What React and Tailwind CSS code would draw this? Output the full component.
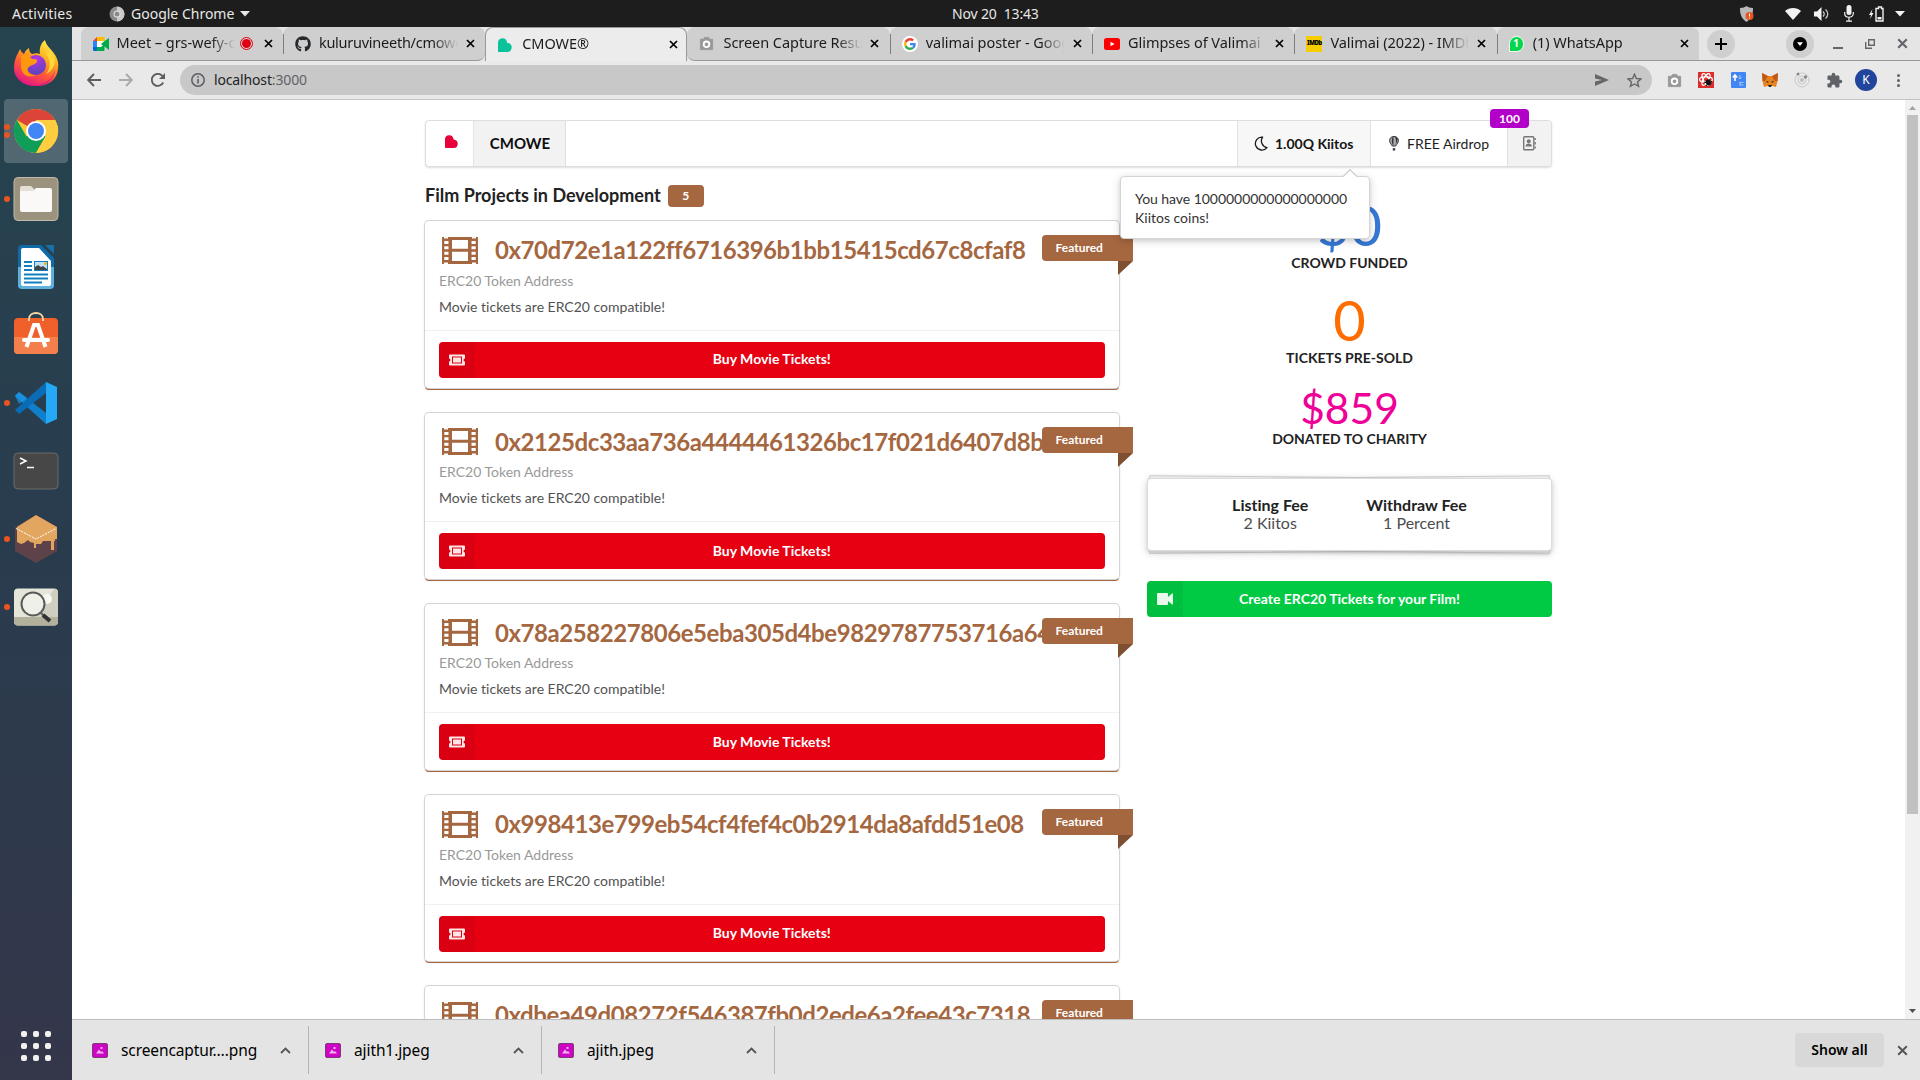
import React from "react";
import { FaGithub } from "react-icons/fa";
import { MdExtension } from "react-icons/md";

/* ---------- dock icons ---------- */

const FirefoxIcon = () => (
  <svg width="46" height="48" viewBox="0 0 46 48">
    <defs>
      <linearGradient id="ffBody" x1="0.8" y1="0" x2="0.3" y2="1">
        <stop offset="0" stopColor="#fff44f" />
        <stop offset="0.35" stopColor="#ffb020" />
        <stop offset="0.65" stopColor="#ff5a36" />
        <stop offset="1" stopColor="#e31587" />
      </linearGradient>
      <radialGradient id="ffGlobe" cx="0.5" cy="0.2" r="0.9">
        <stop offset="0" stopColor="#b833e1" />
        <stop offset="1" stopColor="#4a48b8" />
      </radialGradient>
    </defs>
    <path d="M7 10c1 2 2 4 4 5 1-3 3-5 5-6 0 3 1 5 3 6 3-1 6-1 8 0-1-6 1-11 5-14 1 5 5 8 8 12 4 5 6 10 5 17-1 11-10 17-22 17S1 40 1 29c0-8 3-13 6-19z" fill="url(#ffBody)" />
    <circle cx="23" cy="26" r="10" fill="url(#ffGlobe)" />
    <path d="M8 17c5-3 9 0 11 3 3 0 6 0 5 3-2 3-7 3-9 6-2 4 3 8 8 7-8 4-15-1-15-9z" fill="#ff980e" />
    <path d="M33 15c5 6 5 14 0 20 9-4 12-15 4-24z" fill="#ffd83a" />
    <path d="M3 34c4 11 16 14 25 11 8-2 13-8 14-15 0 10-8 17-19 17C13 47 5 43 3 34z" fill="#e31587" opacity=".85" />
  </svg>
);

const ChromeIcon = () => (
  <svg width="46" height="46" viewBox="0 0 46 46">
    <circle cx="23" cy="23" r="22" fill="#fcc934" />
    <path d="M23 23 L3.9 12 A22 22 0 0 1 42.1 12 Z" fill="#db4437" />
    <path d="M23 12h19.1a22 22 0 0 1 2.9 11H23z" fill="#fcc934" />
    <path d="M3.9 12A22 22 0 0 0 23 45l9.500-16.500L23 23 13.500 28.500z" fill="#0f9d58" />
    <path d="M23 45a22 22 0 0 0 19.100-33H23l9.500 16.500z" fill="#ffcd40" />
    <circle cx="23" cy="23" r="10" fill="#fff" />
    <circle cx="23" cy="23" r="8" fill="#4285f4" />
  </svg>
);

const FilesIcon = () => (
  <svg width="46" height="46" viewBox="0 0 46 46">
    <rect x="1" y="1.5" width="44" height="43" rx="4" fill="#9c937f" stroke="#c2bba9" />
    <path d="M7 12a2 2 0 0 1 2-2h9l3 3v8H7z" fill="#e3dfd4" />
    <path d="M7 15h13l3-3h14a2 2 0 0 1 2 2v20a2 2 0 0 1-2 2H9a2 2 0 0 1-2-2z" fill="#faf9f7" />
  </svg>
);

const WriterIcon = () => (
  <svg width="38" height="46" viewBox="0 0 38 46">
    <path d="M5 1h19l13 13v27a4 4 0 0 1-4 4H5a4 4 0 0 1-4-4V5a4 4 0 0 1 4-4z" fill="#0f6ba8" />
    <path d="M1 23h36v18a4 4 0 0 1-4 4H5a4 4 0 0 1-4-4z" fill="#5fb0de" />
    <path d="M6 4h16l12 13v23a2 2 0 0 1-2 2H6a2 2 0 0 1-2-2V6a2 2 0 0 1 2-2z" fill="#fff" />
    <path d="M28 1h9v9z" fill="#1a6fa8" />
    <path d="M7 18h8M7 22h8M7 26h8M7 30.500h24M7 34.500h24M7 38.500h18" stroke="#0f80bd" strokeWidth="1.800" />
    <rect x="17.500" y="17.500" width="13" height="9" fill="#bfe0f5" stroke="#0f80bd" />
    <path d="M18 26v-3l3-2 3 2 2-1 4 3v1z" fill="#444" />
    <circle cx="28.500" cy="19.500" r="1.500" fill="#f5b400" />
  </svg>
);

const SoftwareIcon = () => (
  <svg width="46" height="46" viewBox="0 0 46 46" className="mb-[5px]">
    <rect x="1" y="8" width="44" height="36" rx="4" fill="#f0602a" />
    <path d="M1 27h44v13a4 4 0 0 1-4 4H5a4 4 0 0 1-4-4z" fill="#f37f4d" />
    <path d="M16 11V9c0-8 14-8 14 0v2" fill="none" stroke="#f3d9a5" strokeWidth="2" />
    <path d="M13.500 37L21 15h4l7.500 22" fill="none" stroke="#fff" strokeWidth="4" />
    <path d="M11 30h24" stroke="#fff" strokeWidth="4" strokeLinecap="round" />
  </svg>
);

const CodeIcon = () => (
  <svg width="44" height="44" viewBox="0 0 44 44">
    <path d="M1 15l4-4 27 21v11z" fill="#1180cc" />
    <path d="M1 29l4 4 27-21V1z" fill="#0a6cb5" />
    <path d="M1 15l4-4 8 6-8 6z" fill="#1f9cf0" opacity=".6" />
    <path d="M32 1l11 5v32l-11 5z" fill="#25a9f5" />
  </svg>
);

const TerminalIcon = () => (
  <svg width="46" height="40" viewBox="0 0 46 40">
    <rect x="1" y="2" width="44" height="36" rx="4" fill="#474747" stroke="#6b6b6b" />
    <path d="M7 7l6 3-6 3" fill="none" stroke="#fff" strokeWidth="1.500" />
    <path d="M14 16.500h7" stroke="#fff" strokeWidth="1.500" />
  </svg>
);

const CubeIcon = () => (
  <svg width="44" height="48" viewBox="0 0 44 48">
    <path d="M22 0l21 12v24L22 48 1 36V12z" fill="#5d4349" />
    <path d="M22 0l21 12v12h-2v2h-1v9h-3v-9h-8l-2 3h-5v4h-2v-5l-4-1-2-2-4 3-3 1-4-2V12z" fill="#e2a660" />
    <path d="M2 13.500l20 10.500 20-10.500" fill="none" stroke="#fff" strokeWidth="1" strokeDasharray="2 1" />
  </svg>
);

const ViewerIcon = () => (
  <svg width="46" height="40" viewBox="0 0 46 40">
    <rect x="1" y="1.500" width="44" height="37" rx="4" fill="#e6e5da" />
    <path d="M22 31L41 2c3 0 4 2 4 4v25z" fill="#cfcebf" />
    <path d="M1 30h44v4.500a4 4 0 0 1-4 4H5a4 4 0 0 1-4-4z" fill="#b3b09c" />
    <circle cx="34" cy="12" r="5" fill="#f7f7f2" />
    <circle cx="20" cy="17" r="11.500" fill="#f3f3ef" fillOpacity=".75" stroke="#5a5a5a" strokeWidth="2" />
    <path d="M28 26l3 3" stroke="#5a5a5a" strokeWidth="2" />
    <path d="M30 28l7 6" stroke="#333" strokeWidth="4" />
  </svg>
);

const dock = [
  { Icon: FirefoxIcon, dots: 0 },
  { Icon: ChromeIcon, dots: 2, active: true },
  { Icon: FilesIcon, dots: 1 },
  { Icon: WriterIcon, dots: 0 },
  { Icon: SoftwareIcon, dots: 0 },
  { Icon: CodeIcon, dots: 1 },
  { Icon: TerminalIcon, dots: 0 },
  { Icon: CubeIcon, dots: 1 },
  { Icon: ViewerIcon, dots: 1 },
];

function Dock() {
  return (
    <div className="flex w-[72px] shrink-0 flex-col justify-between bg-gradient-to-b from-[#25444f] via-[#293c4e] to-[#34364a] pb-[19px] pt-1">
      <div className="flex flex-col gap-1">
        {dock.map(({ Icon, dots, active }, i) => (
          <div key={i} className="flex h-16 items-center pl-1">
            <div className={"relative flex h-16 w-16 items-center justify-center rounded " + (active ? "bg-white/20" : "")}>
              <div className="absolute left-0 flex flex-col gap-[2px]">
                {Array.from({ length: dots }).map((_, d) => (
                  <span key={d} className="h-[6px] w-[6px] rounded-full bg-[#e95420]" />
                ))}
              </div>
              <Icon />
            </div>
          </div>
        ))}
      </div>
      <div className="ml-[21px] grid w-[30px] grid-cols-3 gap-[6px]">
        {Array.from({ length: 9 }).map((_, i) => (
          <span key={i} className="h-[6px] w-[6px] rounded-[2px] bg-[#f2f1f0]" />
        ))}
      </div>
    </div>
  );
}

/* ---------- desktop top bar ---------- */

function TopBar() {
  return (
    <div className="relative flex h-[27px] items-center bg-[#1d1d1d] text-[14px] text-[#e8e8e6]">
      <span className="ml-3 w-[97px] tracking-[0.2px]">Activities</span>
      <svg width="16" height="16" viewBox="0 0 16 16">
        <circle cx="8" cy="8" r="7.500" fill="#8a8a8a" />
        <path d="M8 8V.5A7.500 7.500 0 0 1 8 15.500z" fill="#c9c9c9" />
        <circle cx="8" cy="8" r="3.500" fill="#e6e6e6" />
        <circle cx="8" cy="8" r="2.500" fill="#8a8a8a" />
      </svg>
      <span className="ml-[6px]">Google Chrome</span>
      <svg className="ml-[6px]" width="10" height="6" viewBox="0 0 10 6"><path d="M0 0h10L5 5.500z" fill="#e8e8e6" /></svg>
      <span className="absolute left-[952px] whitespace-pre tracking-[-0.15px]">Nov 20  13:43</span>
      <div className="ml-auto flex h-full items-center">
        <svg className="mr-[31px]" width="14" height="16" viewBox="0 0 14 16">
          <path d="M6.500 0C8 1 10 2 13 2c0 6-1 10-6.500 14C1 12 0 8 0 2c3 0 5-1 6.500-2z" fill="#b9b9b9" />
          <circle cx="9.500" cy="10" r="4" fill="#e95420" />
          <path d="M9.500 7.500v3M9.500 11.500v1" stroke="#fff" strokeWidth="1" />
        </svg>
        <svg className="mr-[13px]" width="16" height="12" viewBox="0 0 16 12"><path d="M0 3C4-1 12-1 16 3L8 12z" fill="#f2f2f2" /></svg>
        <svg className="mr-[15px]" width="15" height="14" viewBox="0 0 15 14">
          <path d="M0 4.500h3L7.500 0v14L3 9.500H0z" fill="#f2f2f2" />
          <path d="M9 4.500c1.500 1.500 1.500 3.500 0 5M11.500 2.500c3 2.500 3 6.500 0 9" fill="none" stroke="#cfcfcf" strokeWidth="1.200" />
        </svg>
        <svg className="mr-[15px]" width="10" height="17" viewBox="0 0 10 17">
          <rect x="2.500" y="0" width="5" height="10" rx="2.500" fill="#f2f2f2" />
          <path d="M.7 7v1.500C.7 13.500 9.300 13.500 9.300 8.500V7M5 12v4M2 16.200h6" fill="none" stroke="#f2f2f2" strokeWidth="1.200" />
        </svg>
        <svg className="mr-[11px]" width="15" height="16" viewBox="0 0 15 16">
          <path d="M3.500 3L0 9h2l-1 4 3.500-6H2.500z" fill="#f2f2f2" />
          <path d="M7 2.500h2.500V1h3v1.500H14V15H7z" fill="none" stroke="#f2f2f2" strokeWidth="1.400" />
          <path d="M8.500 11h4v2.500h-4z" fill="#f2f2f2" />
        </svg>
        <svg className="mr-[15px]" width="10" height="6" viewBox="0 0 10 6"><path d="M0 0h10L5 5.500z" fill="#f2f2f2" /></svg>
      </div>
    </div>
  );
}

/* ---------- browser chrome ---------- */

const HeartShape = ({ color, size }) => (
  <svg width={size} height={size} viewBox="0 0 13 13">
    <path d="M0 4.300A4.200 4.200 0 0 1 8.300 3.600Q8.400 4.700 9.400 4.700A4.200 4.200 0 0 1 8.700 13H.8A.8 .8 0 0 1 0 12.200z" fill={color} />
  </svg>
);

const CameraIcon = ({ size = 16 }) => (
  <svg width={size} height={size} viewBox="0 0 16 16">
    <path d="M1.500 3.500h3L6 1.500h4l1.500 2h3v11h-13z" fill="#999" stroke="#999" strokeLinejoin="round" />
    <circle cx="8" cy="8.800" r="3" fill="none" stroke="#fff" strokeWidth="2" />
  </svg>
);

const CloseX = ({ color = "#000", size = 9, w = 1.7 }) => (
  <svg width={size} height={size} viewBox="0 0 9 9"><path d="M1 1l7 7M8 1L1 8" stroke={color} strokeWidth={w} /></svg>
);

const MeetIcon = () => (
  <svg width="16" height="16" viewBox="0 0 16 16">
    <path d="M0 5l4-4v4z" fill="#ea4335" />
    <path d="M4 1h7.500v4H4z" fill="#fbbc04" />
    <path d="M4 5h7.500v6H4z" fill="#fff" />
    <path d="M0 5h4v6H0z" fill="#2684fc" />
    <path d="M0 11h4v4H1.500A1.500 1.500 0 0 1 0 13.500z" fill="#0066da" />
    <path d="M4 11h4l3.500-3V14a1 1 0 0 1-1 1H4zM11.500 5L16 2v12l-4.500-3.500L8 8z" fill="#00ac47" />
  </svg>
);

const GoogleIcon = () => (
  <span className="flex h-4 w-4 items-center justify-center rounded-full bg-white">
    <svg width="12" height="12" viewBox="0 0 48 48">
      <path fill="#EA4335" d="M24 9.500c3.540 0 6.710 1.220 9.210 3.600l6.850-6.850C35.900 2.380 30.470 0 24 0 14.620 0 6.510 5.380 2.560 13.220l7.980 6.190C12.430 13.720 17.740 9.500 24 9.500z" />
      <path fill="#4285F4" d="M46.980 24.550c0-1.570-.15-3.090-.38-4.550H24v9.020h12.940c-.58 2.960-2.260 5.480-4.780 7.180l7.730 6c4.510-4.180 7.090-10.360 7.090-17.650z" />
      <path fill="#FBBC05" d="M10.530 28.590c-.48-1.450-.76-2.990-.76-4.590s.27-3.140.76-4.590l-7.980-6.190C.92 16.460 0 20.120 0 24c0 3.880.92 7.540 2.560 10.780l7.970-6.190z" />
      <path fill="#34A853" d="M24 48c6.480 0 11.930-2.130 15.890-5.810l-7.730-6c-2.150 1.450-4.920 2.300-8.160 2.300-6.260 0-11.570-4.220-13.470-9.910l-7.980 6.190C6.510 42.620 14.620 48 24 48z" />
    </svg>
  </span>
);

const YoutubeIcon = () => (
  <svg width="16" height="12" viewBox="0 0 16 12"><rect width="16" height="12" rx="2.500" fill="#f00" /><path d="M6.500 3.800l4 2.200-4 2.200z" fill="#fff" /></svg>
);

const ImdbIcon = () => (
  <span className="flex h-4 w-4 items-center justify-center bg-[#f5cd00] text-[6px] font-black tracking-[-0.5px] text-black">IMDb</span>
);

const WhatsappIcon = () => (
  <span className="flex h-[16px] w-[15px] items-center justify-center rounded-full rounded-bl-none border border-white bg-[#05d64c] text-[10px] font-bold text-white">1</span>
);

const tabs = [
  { title: "Meet – grs-wefy-oxc", icon: <MeetIcon />, rec: true },
  { title: "kuluruvineeth/cmowe", icon: <FaGithub size={16} color="#24292e" />, end: true },
  { title: "CMOWE®", icon: <HeartShape color="#0bc39b" size={14} />, active: true },
  { title: "Screen Capture Result", icon: <CameraIcon size={15} /> },
  { title: "valimai poster - Google", icon: <GoogleIcon /> },
  { title: "Glimpses of Valimai | A", icon: <YoutubeIcon /> },
  { title: "Valimai (2022) - IMDb", icon: <ImdbIcon /> },
  { title: "(1) WhatsApp", icon: <WhatsappIcon />, last: true },
];

function Tab({ t, i }) {
  const shape = t.active
    ? "h-[34px] border border-b-0 border-[#999] bg-[#ececec]"
    : "h-[34px] border-b border-[#999] bg-[#cfcfcf]";
  const sep = !t.active && i !== 0 && i !== 3;
  return (
    <div className={"relative flex w-[202.3px] shrink-0 items-center rounded-t-lg pl-3 " + shape + (t.end ? " rounded-br-lg" : "") + (i === 3 ? " rounded-bl-lg" : "")}>
      {sep && <span className="absolute left-0 top-[7px] h-[20px] w-px bg-[#7e7e7e]" />}
      <span className="flex w-6 shrink-0 items-center">{t.icon}</span>
      <span
        className={
          "mb-px shrink-0 overflow-hidden whitespace-nowrap text-[14.5px] text-[#1b1b1b] " +
          (t.end ? "tracking-[-0.25px] " : "tracking-[-0.05px] ") +
          (t.rec
            ? "w-[118px] [mask-image:linear-gradient(90deg,#000_80%,transparent)]"
            : "w-[139px] [mask-image:linear-gradient(90deg,#000_82%,transparent)]")
        }
      >
        {t.title}
      </span>
      {t.rec && (
        <span className="absolute left-[159px] flex h-[13px] w-[13px] items-center justify-center rounded-full border border-[#e00012]">
          <span className="h-[9px] w-[9px] rounded-full bg-[#e00012]" />
        </span>
      )}
      <span className="absolute left-[183px]"><CloseX /></span>
    </div>
  );
}

function TabStrip() {
  return (
    <div className="flex h-[34px] bg-[#e5e5e5] text-[#111]">
      <div className="w-[8.6px] shrink-0 border-b border-[#999]" />
      {tabs.map((t, i) => <Tab key={i} t={t} i={i} />)}
      <div className="flex flex-1 items-center border-b border-[#999] pl-2">
        <span className="flex h-7 w-7 items-center justify-center rounded-full bg-[#cfcfcf]">
          <svg width="12" height="12" viewBox="0 0 12 12"><path d="M6 0v12M0 6h12" stroke="#000" strokeWidth="2" /></svg>
        </span>
        <span className="ml-auto flex h-7 w-7 items-center justify-center rounded-full bg-[#cfcfcf]">
          <svg width="14" height="14" viewBox="0 0 14 14"><circle cx="7" cy="7" r="7" fill="#000" /><path d="M4 5.200h6L7 9z" fill="#fff" /></svg>
        </span>
        <span className="ml-[19px] mt-2 h-[2px] w-[10px] bg-[#63666a]" />
        <svg className="ml-[22px]" width="10" height="10" viewBox="0 0 10 10"><path d="M3.700.700h5.600v5.600H3.700zM.700 3v6.300H7" fill="none" stroke="#63666a" strokeWidth="1.400" /></svg>
        <span className="ml-[22px] mr-[12px]"><CloseX size={11} color="#63666a" w={1.8} /></span>
      </div>
    </div>
  );
}

const FoxIcon = () => (
  <svg width="16" height="15" viewBox="0 0 16 15">
    <path d="M0 0l6 3h4l6-3-.5 8L14 14l-3.500-1h-5L2 14 .5 8z" fill="#e8821e" />
    <path d="M0 0l6 3-3 5-2.500 0zM16 0l-6 3 3 5 2.500 0z" fill="#c0581a" />
    <path d="M4 8l2.500.500L6 10zM12 8l-2.500.500L10 10zM6 12h4l-1 2H7z" fill="#222" />
  </svg>
);

const BlueToolIcon = () => (
  <svg width="15" height="16" viewBox="0 0 15 16">
    <rect width="15" height="16" rx="1" fill="#4285f4" />
    <path d="M4 3v6M1.800 5.500L4 3l2.200 2.500" stroke="#fff" strokeWidth="1.600" fill="none" />
    <path d="M9 3v4M7.500 5.500L9 7l1.500-1.500M8.500 10.500h4M8.500 13h4M9 10v3.500" stroke="#a9c8fa" strokeWidth="1" fill="none" />
  </svg>
);

const RedToolIcon = () => (
  <svg width="16" height="16" viewBox="0 0 16 16">
    <rect width="16" height="16" fill="#dd2c2c" />
    <g fill="none" stroke="#fff" strokeWidth="1.200">
      <ellipse cx="8" cy="7.500" rx="6.500" ry="2.600" />
      <ellipse cx="8" cy="7.500" rx="6.500" ry="2.600" transform="rotate(60 8 7.500)" />
      <ellipse cx="8" cy="7.500" rx="6.500" ry="2.600" transform="rotate(120 8 7.500)" />
    </g>
    <ellipse cx="10.500" cy="10.500" rx="2.500" ry="3.200" fill="#111" transform="rotate(-35 10.500 10.500)" />
    <path d="M6 10l3 1M8 14l2-3M11 7l1 2M14 9l-2 2" stroke="#111" />
  </svg>
);

function Toolbar() {
  return (
    <div className="flex h-[39px] shrink-0 items-center border-b border-[#c2c2c2] bg-[#e9e9e9] pl-[15px]">
      <svg width="14" height="14" viewBox="0 0 14 14"><path d="M14 7H1.500M7 1L1.200 7 7 13" fill="none" stroke="#5b5e62" strokeWidth="1.900" /></svg>
      <svg className="ml-[18px]" width="14" height="14" viewBox="0 0 14 14"><path d="M0 7h12.500M7 1l5.800 6L7 13" fill="none" stroke="#a9abad" strokeWidth="1.900" /></svg>
      <svg className="ml-[18px]" width="14" height="14" viewBox="0 0 14 14"><path d="M12.200 9.500A6 6 0 1 1 11.400 3" fill="none" stroke="#5b5e62" strokeWidth="1.900" /><path d="M14 0v6H8z" fill="#5b5e62" /></svg>
      <div className="ml-[15px] flex h-[30px] w-[1472px] items-center rounded-full bg-[#c8c8c8] pl-[11px]">
        <svg width="14" height="14" viewBox="0 0 14 14"><circle cx="7" cy="7" r="6.200" fill="none" stroke="#5b5e62" strokeWidth="1.500" /><path d="M7 6v4.500M7 3.300v1.500" stroke="#5b5e62" strokeWidth="1.600" /></svg>
        <span className="mb-px ml-[9px] text-[14px] tracking-[-0.15px] text-[#222]">localhost<span className="text-[#5f6368]">:3000</span></span>
        <svg className="ml-auto" width="14" height="12" viewBox="0 0 14 12"><path d="M0 0l14 6-14 6V7.500L7 6 0 4.500z" fill="#63666a" /></svg>
        <svg className="ml-[18px] mr-[10px]" width="15" height="15" viewBox="0 0 15 15"><path d="M7.500 1.200l1.900 4.300 4.600.400-3.500 3 1.100 4.500-4.100-2.400-4.100 2.400 1.100-4.500-3.500-3 4.600-.400z" fill="none" stroke="#63666a" strokeWidth="1.400" /></svg>
      </div>
      <span className="ml-[15px] w-[31px]"><CameraIcon size={15} /></span>
      <span className="w-[33px]"><RedToolIcon /></span>
      <span className="w-[31px]"><BlueToolIcon /></span>
      <span className="w-[32px]"><FoxIcon /></span>
      <span className="w-[32px]">
        <svg width="16" height="16" viewBox="0 0 16 16"><circle cx="8" cy="8" r="7" fill="none" stroke="#c9c9c9" /><circle cx="8" cy="8" r="4" fill="none" stroke="#c9c9c9" /><circle cx="8" cy="8" r="2" fill="#bdbdbd" /><circle cx="4" cy="2" r="1.500" fill="#888" /><circle cx="11.500" cy="5" r="1.700" fill="#888" /></svg>
      </span>
      <span className="w-[29px]"><MdExtension size={17} color="#5f6368" /></span>
      <span className="flex h-[22px] w-[22px] items-center justify-center rounded-full bg-[#21459c] text-[12px] text-white">K</span>
      <span className="ml-[20px] flex flex-col gap-[2px]">
        {[0, 1, 2].map((d) => <span key={d} className="h-[3px] w-[3px] rounded-full bg-[#5f6368]" />)}
      </span>
    </div>
  );
}

/* ---------- page ---------- */

const FilmIcon = () => (
  <svg width="36" height="27" viewBox="0 0 36 27">
    <path
      fillRule="evenodd"
      fill="#a5673f"
      d="M0 0H2V1.500H6V0H30V1.500H34V0H36V27H34V25.500H30V27H6V25.500H2V27H0ZM2.300 4V7H6.500V4ZM2.300 9.300V12.300H6.500V9.300ZM2.300 14.700V17.700H6.500V14.700ZM2.300 20V23H6.500V20ZM29.500 4V7H33.700V4ZM29.500 9.300V12.300H33.700V9.300ZM29.500 14.700V17.700H33.700V14.700ZM29.500 20V23H33.700V20ZM10 3V11.700H26V3ZM10 14.700V24H26V14.700Z"
    />
  </svg>
);

const MoonIcon = () => (
  <svg width="14" height="15" viewBox="0 0 14 15">
    <path d="M8.600 1.100A6.500 6.500 0 1 0 13 11.600 6.800 6.800 0 0 1 8.600 1.100z" fill="none" stroke="#1b1b1b" strokeWidth="1.300" strokeLinejoin="round" />
  </svg>
);

const BalloonIcon = () => (
  <svg width="10" height="15" viewBox="0 0 10 15">
    <path d="M5 .5C2 .5.600 2.500.600 4.500S2 8 3.300 10h3.400C8 8 9.400 6.500 9.400 4.500S8 .5 5 .5z" fill="#aaa" stroke="#333" strokeWidth="1" />
    <path d="M4.500.5C2.200 2 2.500 7 4.300 10zM6 .5c2.500 1 3 2.500 2.200 4.500L6.300 10c.700-2 1.300-6-.3-9.500z" fill="#333" />
    <path d="M3.800 12.200h2.400v2.300H3.800z" fill="#333" />
  </svg>
);

const AddressIcon = () => (
  <svg width="13" height="15" viewBox="0 0 13 15">
    <rect x=".7" y=".7" width="10.100" height="13.100" rx="1" fill="none" stroke="#777" strokeWidth="1.400" />
    <circle cx="5.750" cy="5.300" r="2" fill="#777" />
    <path d="M2.500 10.500c0-4 6.500-4 6.500 0z" fill="#777" />
    <path d="M12.200 2v2M12.200 6v2.500M12.200 10.500v2" stroke="#777" strokeWidth="1.300" />
  </svg>
);

function MenuBar() {
  return (
    <div className="relative flex h-[47px] rounded border border-[#dededf] bg-white text-[14px] leading-none text-[#1e1e1e] shadow-[0_1px_2px_0_rgba(34,36,38,.15)]">
      <div className="flex w-[48px] items-center justify-center border-r border-[#e4e4e5] pl-1">
        <span className="mb-1"><HeartShape color="#e8003a" size={13} /></span>
      </div>
      <div className="flex w-[92px] items-center justify-center border-r border-[#dededf] bg-[#f2f2f2] pl-px text-[15px] font-bold text-[#0d0d0d]">CMOWE</div>
      <div className="ml-auto flex w-[133px] items-center border-l border-[#e1e1e2] bg-[#f7f7f7] pl-4 font-bold text-[#151515]">
        <MoonIcon />
        <span className="ml-[7px]">1.00Q Kiitos</span>
      </div>
      <div className="flex w-[137px] items-center border-l border-[#e1e1e2] pl-[18px]">
        <BalloonIcon />
        <span className="ml-[8px]">FREE Airdrop</span>
      </div>
      <div className="flex w-[44px] items-center rounded-r border-l border-[#e1e1e2] bg-[#f2f2f2] pl-[15px]">
        <AddressIcon />
      </div>
      <span className="absolute right-[22px] top-[-12px] flex h-[19px] w-[39px] items-center justify-center rounded bg-[#b200c8] text-[12px] font-bold text-white">100</span>
      <div className="absolute left-[694px] top-[55px] z-20 h-[63px] w-[250px] rounded border border-[#d4d4d5] bg-white pl-[14px] pt-[12px] text-[14px] leading-[19px] text-[#333] shadow-[0_2px_4px_0_rgba(34,36,38,.12),0_2px_10px_0_rgba(34,36,38,.15)]">
        <span className="absolute right-[14px] top-[-6px] h-[10px] w-[10px] rotate-45 border-l border-t border-[#c4c4c5] bg-white" />
        <span className="tracking-[-0.05px]">You have 1000000000000000000</span>
        <br />
        Kiitos coins!
      </div>
    </div>
  );
}

const addresses = [
  "0x70d72e1a122ff6716396b1bb15415cd67c8cfaf8",
  "0x2125dc33aa736a4444461326bc17f021d6407d8b",
  "0x78a258227806e5eba305d4be9829787753716a64",
  "0x998413e799eb54cf4fef4c0b2914da8afdd51e08",
  "0xdbea49d08272f546387fb0d2ede6a2fee43c7318",
];

function FilmCard({ address }) {
  return (
    <div className="relative h-[166.25px] w-[693.5px] shrink-0 rounded bg-white shadow-[0_0_0_1px_#d4d4d5,0_2px_0_0_#a5673f,0_1px_3px_0_#d4d4d5]">
      <div className="h-[108.5px] overflow-hidden px-[14px] pt-[13px]">
        <div className="flex h-8 items-center text-[24px] font-bold leading-8 tracking-[-0.43px] text-[#a5673f]">
          <span className="ml-[3px] mr-[17px] shrink-0"><FilmIcon /></span>
          <span className="whitespace-nowrap">{address}</span>
        </div>
        <div className="mt-[4.5px] text-[14px] leading-5 text-[#999]">ERC20 Token Address</div>
        <div className="mt-[6px] text-[14px] leading-5 text-[#525252]">Movie tickets are ERC20 compatible!</div>
      </div>
      <div className="border-t border-[#f0f0f0] px-[14px] pt-[11px]">
        <div className="relative flex h-9 items-center justify-center overflow-hidden rounded bg-[#e60012] pb-[2px] text-[14px] font-bold text-white">
          <span className="absolute left-0 top-0 flex h-9 w-9 items-center justify-center bg-black/5">
            <svg width="16" height="12" viewBox="0 0 16 12">
              <path fillRule="evenodd" d="M1 .5h14a1 1 0 0 1 1 1V4.500a1.500 1.500 0 0 0 0 3v3a1 1 0 0 1-1 1H1a1 1 0 0 1-1-1V7.500a1.500 1.500 0 0 0 0-3V1.500a1 1 0 0 1 1-1zM3 2.500v7h10v-7z" fill="#fff" opacity=".9" />
              <rect x="4" y="3.500" width="8" height="5" fill="#fff" opacity=".9" />
            </svg>
          </span>
          Buy Movie Tickets!
        </div>
      </div>
      <div className="absolute right-[-14.5px] top-[14px] flex h-[26px] w-[91.5px] items-center rounded-l bg-[#a5673f] pl-[14px] text-[12px] font-bold text-white">
        Featured
        <svg className="absolute right-0 top-[26px]" width="15" height="14" viewBox="0 0 15 14"><path d="M0 0h15L0 14z" fill="#7f4f31" /></svg>
      </div>
    </div>
  );
}

function Statistic({ value, label, valueClass }) {
  return (
    <div className="flex flex-col items-center">
      <div className={valueClass}>{value}</div>
      <div className="text-[14px] font-bold uppercase leading-5 text-[#222]">{label}</div>
    </div>
  );
}

function Sidebar() {
  return (
    <div className="w-[405px]">
      <Statistic value="$0" label="Crowd Funded" valueClass="mt-[30px] h-[56px] text-[56px] leading-[56px] text-[#3578d4]" />
      <Statistic value="0" label="Tickets Pre-Sold" valueClass="mt-[19px] h-[56px] text-[56px] leading-[56px] text-[#ff6d00]" />
      <Statistic value="$859" label="Donated To Charity" valueClass="mt-[18px] h-[43px] text-[42.5px] leading-[44px] text-[#ef0097]" />
      <div className="relative mt-[29px] h-[73px]">
        <div className="absolute inset-x-[2px] inset-y-[-1px] rotate-[0.5deg] border border-[#d0d0d1] bg-[#f7f7f7] shadow-[0_1px_3px_0_rgba(34,36,38,.15)]" />
        <div className="absolute inset-x-[2px] inset-y-[-1px] rotate-[-0.5deg] border border-[#d0d0d1] bg-[#f7f7f7]/70" />
        <div className="relative flex h-[73px] justify-center rounded border border-[#dcdcdd] bg-white pt-[17px] text-center text-[16px] leading-[18px] text-[#4d4d4d] shadow-[0_2px_4px_0_rgba(34,36,38,.12),0_2px_10px_0_rgba(34,36,38,.15)]">
          <div className="mr-[58px]">
            <div className="font-bold text-[#222]">Listing Fee</div>
            <div>2 Kiitos</div>
          </div>
          <div>
            <div className="font-bold text-[#222]">Withdraw Fee</div>
            <div>1 Percent</div>
          </div>
        </div>
      </div>
      <div className="relative mt-[30px] flex h-9 items-center justify-center overflow-hidden rounded bg-[#00ca43] pb-[2px] text-[14px] font-bold text-white">
        <span className="absolute left-0 top-0 flex h-9 w-9 items-center justify-center bg-black/5">
          <svg width="16" height="12" viewBox="0 0 16 12"><path d="M1 0h9a1 1 0 0 1 1 1v3l4-3.500h1v11h-1L11 8v3a1 1 0 0 1-1 1H1a1 1 0 0 1-1-1V1a1 1 0 0 1 1-1z" fill="#fff" opacity=".9" /></svg>
        </span>
        Create ERC20 Tickets for your Film!
      </div>
    </div>
  );
}

function Page() {
  return (
    <div className="flex h-[919px] shrink-0 overflow-hidden bg-white">
      <div className="flex-1 overflow-hidden pl-[353px] pt-5 font-['Lato',sans-serif] [font-variant-ligatures:none]">
        <div className="w-[1127px]">
          <MenuBar />
          <div className="flex justify-between">
            <div>
              <div className="mt-[18px] flex h-[22px] items-center">
                <h1 className="mb-[2px] text-[18px] font-bold leading-[22px] text-[#222]">Film Projects in Development</h1>
                <span className="ml-[7px] flex h-[22px] w-[36px] items-center justify-center rounded bg-[#a5673f] text-[12px] font-bold text-white">5</span>
              </div>
              <div className="mt-[14.4px] flex flex-col gap-[25px]">
                {addresses.map((a) => <FilmCard key={a} address={a} />)}
              </div>
            </div>
            <Sidebar />
          </div>
        </div>
      </div>
      <div className="flex w-[15px] flex-col items-center justify-between bg-[#f1f1f1] py-[6px]">
        <svg width="7" height="4" viewBox="0 0 7 4"><path d="M0 4h7L3.500 0z" fill="#a3a3a3" /></svg>
        <div className="mb-auto mt-[5px] h-[699px] w-[11px] bg-[#c1c1c1]" />
        <svg width="7" height="4" viewBox="0 0 7 4"><path d="M0 0h7L3.500 4z" fill="#505050" /></svg>
      </div>
    </div>
  );
}

/* ---------- downloads ---------- */

const downloads = ["screencaptur….png", "ajith1.jpeg", "ajith.jpeg"];

function DownloadBar() {
  return (
    <div className="flex flex-1 items-center border-t border-[#bdbdbd] bg-[#e4e4e4] text-[16px] text-black">
      <div className="w-1 shrink-0" />
      {downloads.map((d) => (
        <div key={d} className="flex h-12 w-[233px] items-center border-r border-[#b5b5b5] pl-4">
          <svg width="16" height="15" viewBox="0 0 16 15">
            <rect x=".5" y=".5" width="15" height="14" rx="1.500" fill="#cf05c6" stroke="#7a3a78" />
            <path d="M4 10.500l3-4 2 2.500 1-1 2 2.500zM8.500 4h2v2h-2z" fill="#f3b5f0" />
          </svg>
          <span className="ml-[13px] mt-px text-[15.5px] tracking-[-0.1px]">{d}</span>
          <svg className="ml-auto mr-[17px]" width="11" height="7" viewBox="0 0 11 7"><path d="M1 6l4.500-4.500L10 6" fill="none" stroke="#555" strokeWidth="1.800" /></svg>
        </div>
      ))}
      <span className="ml-auto mb-px flex h-[34px] w-[89px] items-center justify-center rounded bg-[#d8d8d8] text-[14px] font-semibold">Show all</span>
      <span className="ml-[13px] mr-[12px]"><CloseX size={11} color="#555" w={1.6} /></span>
    </div>
  );
}

export default function App() {
  return (
    <div className="flex h-[1080px] w-[1920px] flex-col overflow-hidden font-['Noto_Sans',sans-serif]">
      <TopBar />
      <div className="flex flex-1">
        <Dock />
        <div className="flex w-[1848px] flex-col">
          <TabStrip />
          <Toolbar />
          <Page />
          <DownloadBar />
        </div>
      </div>
    </div>
  );
}
